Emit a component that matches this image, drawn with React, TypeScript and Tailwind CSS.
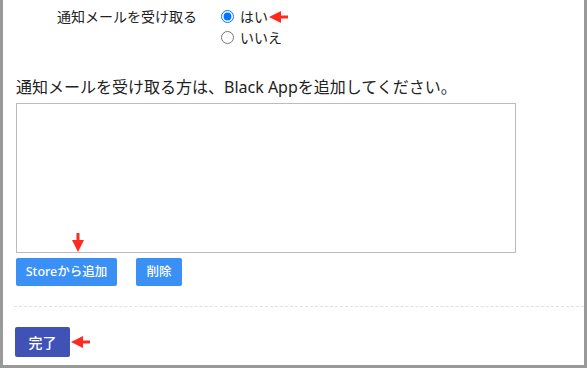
import React from "react";

const ArrowLeft = ({ className }: { className?: string }) => (
  <svg className={className} width="19" height="12" viewBox="0 0 19 12">
    <polygon points="0,6 12,0 12,12" fill="#ff2a1f" />
    <rect x="11" y="4.5" width="8" height="3" fill="#ff2a1f" />
  </svg>
);

const ArrowDown = ({ className }: { className?: string }) => (
  <svg className={className} width="12" height="19" viewBox="0 0 12 19">
    <rect x="4.5" y="0" width="3" height="8" fill="#ff2a1f" />
    <polygon points="0,7 12,7 6,19" fill="#ff2a1f" />
  </svg>
);

export default function App() {
  return (
    <div
      className="relative w-[587px] h-[368px] bg-white border-l-[3px] border-r-[3px] border-b-[3px] border-[#999] text-[#222]"
      style={{ fontFamily: '"Noto Sans", "Noto Sans CJK JP", sans-serif' }}
    >
      <div className="pt-[6px] pl-[54px] flex">
        <div className="text-[14px] leading-[21px] w-[164px]">通知メールを受け取る</div>
        <div className="flex flex-col">
          <label className="relative flex items-center h-[21px] text-[14px]">
            <input type="radio" name="notify" defaultChecked className="m-0 w-[13px] h-[13px]" />
            <span className="ml-[6px]">はい</span>
            <ArrowLeft className="absolute left-[48px] top-[5px]" />
          </label>
          <label className="flex items-center h-[21px] text-[14px]">
            <input type="radio" name="notify" className="m-0 w-[13px] h-[13px]" />
            <span className="ml-[6px]">いいえ</span>
          </label>
        </div>
      </div>

      <div className="pl-[13px]">
        <p className="mt-[27px] text-[16px] leading-[24px]">
          通知メールを受け取る方は、Black Appを追加してください。
        </p>
        <textarea className="block mt-[4px] w-[500px] h-[150px] border border-[#bbb] resize-none outline-none" />
        <div className="relative flex gap-[19px] mt-[5px]">
          <button className="h-[28px] w-[101px] rounded-[2px] bg-[#3a90f5] text-white text-[12.5px] font-medium">
            Storeから追加
          </button>
          <button className="h-[28px] w-[46px] rounded-[2px] bg-[#3a90f5] text-white text-[12.5px] font-medium">
            削除
          </button>
          <ArrowDown className="absolute left-[56px] top-[-25px]" />
        </div>
      </div>

      <div className="mt-[20px] ml-[11px] border-t border-dashed border-[#dde0e6]" />

      <div className="pl-[12px] mt-[20px] relative flex items-center">
        <button className="h-[30px] w-[55px] rounded-[2px] bg-[#4052b6] text-white text-[14px] font-medium">
          完了
        </button>
        <ArrowLeft className="ml-[1px]" />
      </div>
    </div>
  );
}
